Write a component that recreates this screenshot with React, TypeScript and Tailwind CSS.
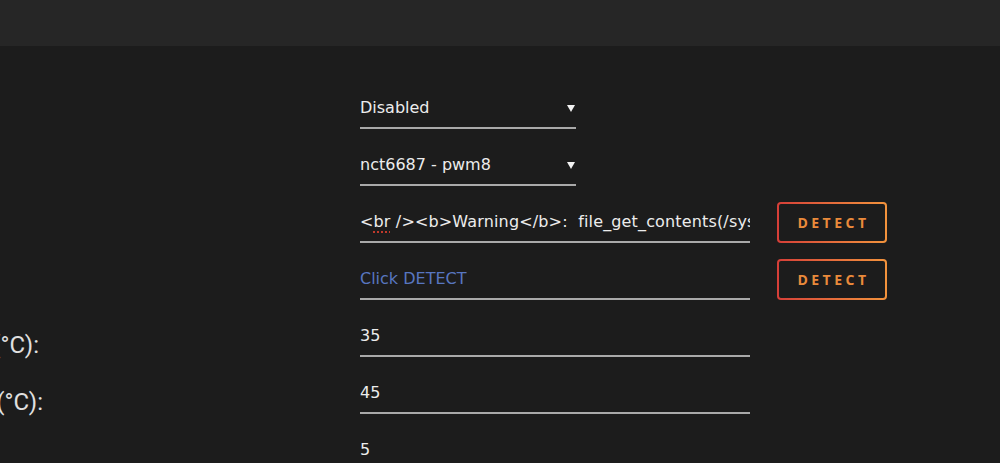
import { type ReactNode } from 'react'

const font = { fontFamily: '"DejaVu Sans", "Noto Sans", sans-serif' }

const Arrow = () => (
  <svg width="8" height="8" viewBox="0 0 8 8" className="shrink-0">
    <path d="M0 1 L8 1 L4 8 Z" fill="#f2f2f2" />
  </svg>
)

const SelectField = ({ value }: { value: string }) => (
  <div className="flex h-[41px] w-[216px] items-center justify-between border-b-2 border-[#a9a9a9] pr-[1px] text-[16px] text-[#ececec]">
    <span className="pt-[1px]">{value}</span>
    <Arrow />
  </div>
)

const TextField = ({ children }: { children: ReactNode }) => (
  <div className="flex h-[41px] w-[390px] items-center overflow-hidden whitespace-nowrap border-b-2 border-[#a9a9a9] pt-[1px] text-[16px] text-[#ececec]">
    {children}
  </div>
)

const DetectButton = () => (
  <div className="ml-[27px] h-[41px] w-[110px] rounded-[4px] bg-gradient-to-r from-[#d63e38] to-[#f2933c] p-[2px]">
    <div
      className="flex h-full w-full items-center justify-center rounded-[2px] bg-[#1c1c1c] pl-[3px] text-[14px] font-bold tracking-[3.5px] text-[#ea8a3b]"
      style={{ fontFamily: '"Open Sans", sans-serif' }}
    >
      DETECT
    </div>
  </div>
)

const Label = ({ text, width }: { text: string; width: string }) => (
  <div
    className={`flex justify-end overflow-hidden whitespace-nowrap pt-[11px] text-[24px] text-[#e0e0e0] ${width}`}
    style={{ fontFamily: 'Roboto, "Liberation Sans", sans-serif' }}
  >
    {text}
  </div>
)

const Row = ({ label, children }: { label?: ReactNode; children: ReactNode }) => (
  <div className="flex h-[57px] items-start">
    <div className="w-[360px] shrink-0">{label}</div>
    {children}
  </div>
)

export default function App() {
  return (
    <div className="h-[463px] w-[1000px] overflow-hidden bg-[#1c1c1c]" style={font}>
      <header className="h-[46px] bg-[#262626]" />
      <main className="pt-[42px]">
        <Row>
          <SelectField value="Disabled" />
        </Row>
        <Row>
          <SelectField value="nct6687 - pwm8" />
        </Row>
        <Row>
          <TextField>
            <span className="tracking-[0.15px]">
              &lt;<span className="underline decoration-[#c0392b] decoration-dotted decoration-2 underline-offset-4">br</span>{' '}
              /&gt;&lt;b&gt;Warning&lt;/b&gt;:&nbsp; file_get_contents(/sys/class/hwmon/hwmon2/pwm8)
            </span>
          </TextField>
          <DetectButton />
        </Row>
        <Row>
          <TextField>
            <span className="text-[#5876c0]">Click DETECT</span>
          </TextField>
          <DetectButton />
        </Row>
        <Row label={<Label text="Low temperature (°C):" width="w-[39px]" />}>
          <TextField>35</TextField>
        </Row>
        <Row label={<Label text="High temperature (°C):" width="w-[43px]" />}>
          <TextField>45</TextField>
        </Row>
        <Row>
          <TextField>5</TextField>
        </Row>
      </main>
    </div>
  )
}
